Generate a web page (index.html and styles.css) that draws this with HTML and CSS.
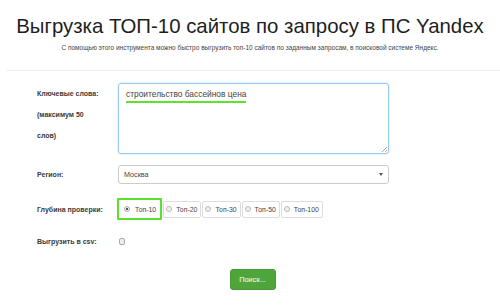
FILE: index.html
```html
<!DOCTYPE html>
<html lang="ru">
<head>
<meta charset="utf-8">
<link rel="stylesheet" href="styles.css">
</head>
<body>
<header class="head">
  <h1 class="title">Выгрузка ТОП-10 сайтов по запросу в ПС Yandex</h1>
  <p class="lead">С помощью этого инструмента можно быстро выгрузить топ-10 сайтов по заданным запросам, в поисковой системе Яндекс.</p>
</header>
<div class="rule"></div>
<form class="form">
  <div class="row row-keys">
    <label class="lbl">Ключевые слова:<br>(максимум 50<br>слов)</label>
    <div class="textarea"><span class="typed">строительство бассейнов цена</span><span class="grip"></span></div>
  </div>
  <div class="row row-region">
    <label class="lbl">Регион:</label>
    <div class="select"><span>Москва</span><span class="caret"></span></div>
  </div>
  <div class="row row-depth">
    <label class="lbl">Глубина проверки:</label>
    <div class="radios">
      <span class="opt opt-on"><span class="dot dot-on"></span>Топ-10</span>
      <span class="opt"><span class="dot"></span>Топ-20</span>
      <span class="opt"><span class="dot"></span>Топ-30</span>
      <span class="opt"><span class="dot"></span>Топ-50</span>
      <span class="opt"><span class="dot"></span>Топ-100</span>
    </div>
  </div>
  <div class="row row-csv">
    <label class="lbl">Выгрузить в csv:</label>
    <span class="check"></span>
  </div>
  <div class="actions">
    <span class="btn">Поиск...</span>
  </div>
</form>
</body>
</html>
```
FILE: styles.css
```css
* { box-sizing: border-box; }
html, body { margin: 0; padding: 0; background: #fff; }
body {
  width: 500px;
  height: 307px;
  overflow: hidden;
  font-family: "Liberation Sans", Arial, sans-serif;
  color: #333;
}
.head { text-align: center; padding-top: 11px; }
.title {
  margin: 0;
  font-size: 20.4px;
  font-weight: normal;
  color: #1e1e1e;
  line-height: 30px;
}
.lead {
  margin: 2px 0 0;
  font-size: 6.5px;
  line-height: 10px;
  color: #444;
}
.rule {
  margin: 17px 0 0 6px;
  height: 1px;
  background: #eee;
}
.form { padding-top: 12px; }
.row {
  display: grid;
  grid-template-columns: 81px 271px;
  padding-left: 37px;
}
.lbl {
  font-size: 7px;
  font-weight: bold;
  color: #3a3a3a;
  line-height: 21px;
}
.textarea {
  position: relative;
  height: 71px;
  border: 1px solid #9cc9f0;
  box-shadow: 0 0 2px #a9d3f7;
  border-radius: 3px;
  padding: 5px 7px;
  font-size: 8.4px;
  color: #444;
}
.typed {
  display: inline-block;
  border-bottom: 2px solid #5ee22e;
  line-height: 11px;
  padding-bottom: 1px;
}
.grip {
  position: absolute;
  right: 1px;
  bottom: 1px;
  width: 5px;
  height: 5px;
  background: linear-gradient(135deg, transparent 45%, #aaa 45%, #aaa 55%, transparent 55%, transparent 75%, #aaa 75%, #aaa 85%, transparent 85%);
}
.row-region { margin-top: 10px; align-items: center; }
.select {
  height: 19px;
  border: 1px solid #ccc;
  border-radius: 3px;
  display: flex;
  align-items: center;
  justify-content: space-between;
  padding: 0 5px;
  font-size: 7.2px;
  color: #444;
}
.caret {
  width: 0; height: 0;
  border-left: 2.5px solid transparent;
  border-right: 2.5px solid transparent;
  border-top: 3px solid #555;
}
.row-depth { margin-top: 13px; align-items: center; }
.radios { display: flex; align-items: center; gap: 1px; margin-left: -1px; }
.opt {
  display: inline-flex;
  align-items: center;
  height: 17px;
  border: 1px solid #ddd;
  border-radius: 2px;
  padding: 0 3px 0 2px;
  font-size: 6.9px;
  color: #444;
}
.opt-on {
  height: 22px;
  border: 2px solid #5be12b;
  border-radius: 1px;
  padding: 0 4px 0 5px;
}
.dot {
  width: 6px; height: 6px;
  border: 1px solid #bbb;
  border-radius: 50%;
  background: #eee;
  margin-right: 4px;
  position: relative;
}
.dot-on { margin-right: 5px; background: #f4f4f4; border-color: #aaa; }
.dot-on::after {
  content: "";
  position: absolute;
  left: 1px; top: 1px;
  width: 2px; height: 2px;
  border-radius: 50%;
  background: #222;
}
.row-csv { margin-top: 11px; }
.check {
  width: 6px;
  height: 7px;
  margin: 7px 0 0 1px;
  border: 1px solid #aaa;
  border-radius: 2px;
  background: #eee;
}
.actions {
  display: flex;
  justify-content: center;
  padding-left: 5px;
  margin-top: 17px;
}
.btn {
  display: inline-flex;
  align-items: center;
  justify-content: center;
  width: 46px;
  height: 21px;
  background: #4ea63a;
  border: 1px solid #47973a;
  border-radius: 3px;
  color: #fff;
  font-size: 7.4px;
}
```
